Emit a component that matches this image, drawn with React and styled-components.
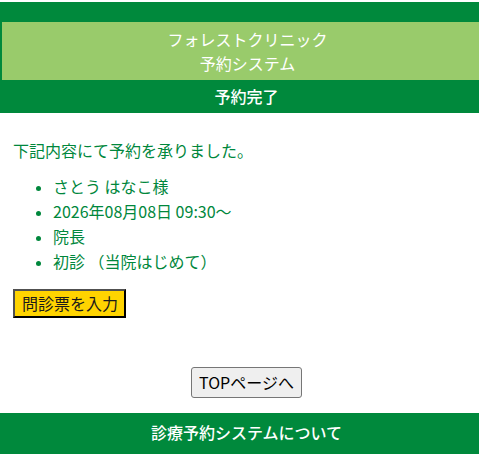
import React from 'react'
import styled, { createGlobalStyle } from 'styled-components'

const GlobalStyle = createGlobalStyle`
    html, body {
        margin: 0;
        padding: 0;
        overflow-x: hidden;
        background: #ffffff;
    }
    body {
        font-family: "Noto Sans CJK JP", "Noto Sans", sans-serif;
        font-size: 16px;
    }
`

const Page = styled.div`
    width: 493px;
    padding-top: 2px;
`

const Header = styled.header`
    background: #00893c;
    padding: 20px 0 0 2px;
`

const ClinicName = styled.h1`
    margin: 0;
    background: #99cb6b;
    color: #ffffff;
    font-size: 16px;
    font-weight: 400;
    line-height: 24px;
    text-align: center;
    padding: 5px 0;
`

const TitleBar = styled.div`
    background: #00893c;
    color: #ffffff;
    font-size: 16px;
    font-weight: 500;
    line-height: 33px;
    text-align: center;
`

const Main = styled.main`
    padding: 25px 13px 0;
    color: #00873c;
`

const Message = styled.p`
    margin: 0;
    line-height: 24px;
`

const List = styled.ul`
    margin: 12px 0 0;
    padding-left: 40px;
    line-height: 25px;

    li::marker {
        font-size: 14px;
    }
`

const FormButton = styled.button`
    margin-top: 15px;
    background: #ffd400;
    color: #1a1a1a;
    font-family: inherit;
    font-size: 16px;
    line-height: 21px;
    padding: 2px 6px 2px 7px;
    border: 2px solid;
    border-color: #505050 #000000 #000000 #505050;
    cursor: pointer;
`

const Center = styled.div`
    display: flex;
    justify-content: center;
    padding: 49px 0 15px;
`

const TopButton = styled.button`
    background: #efefef;
    color: #000000;
    font-family: "Noto Sans CJK JP", sans-serif;
    font-size: 16px;
    line-height: 20px;
    padding: 4px 7px 5px;
    border: 1px solid #767676;
    border-radius: 3px;
`

const Footer = styled.footer`
    background: #00893c;
    color: #ffffff;
    font-size: 16px;
    font-weight: 500;
    line-height: 38px;
    text-align: center;
    padding-bottom: 10px;
`

export default function App() {
    const items = ['さとう はなこ様', '2026年08月08日 09:30〜', '院長', '初診 （当院はじめて）']

    return (
        <Page>
            <GlobalStyle />
            <Header>
                <ClinicName>
                    フォレストクリニック<br />
                    予約システム
                </ClinicName>
            </Header>
            <TitleBar>予約完了</TitleBar>

            <Main>
                <Message>下記内容にて予約を承りました。</Message>
                <List>
                    {items.map((item) => (
                        <li key={item}>{item}</li>
                    ))}
                </List>
                <FormButton>問診票を入力</FormButton>
            </Main>

            <Center>
                <TopButton>TOPページへ</TopButton>
            </Center>

            <Footer>診療予約システムについて</Footer>
        </Page>
    )
}
